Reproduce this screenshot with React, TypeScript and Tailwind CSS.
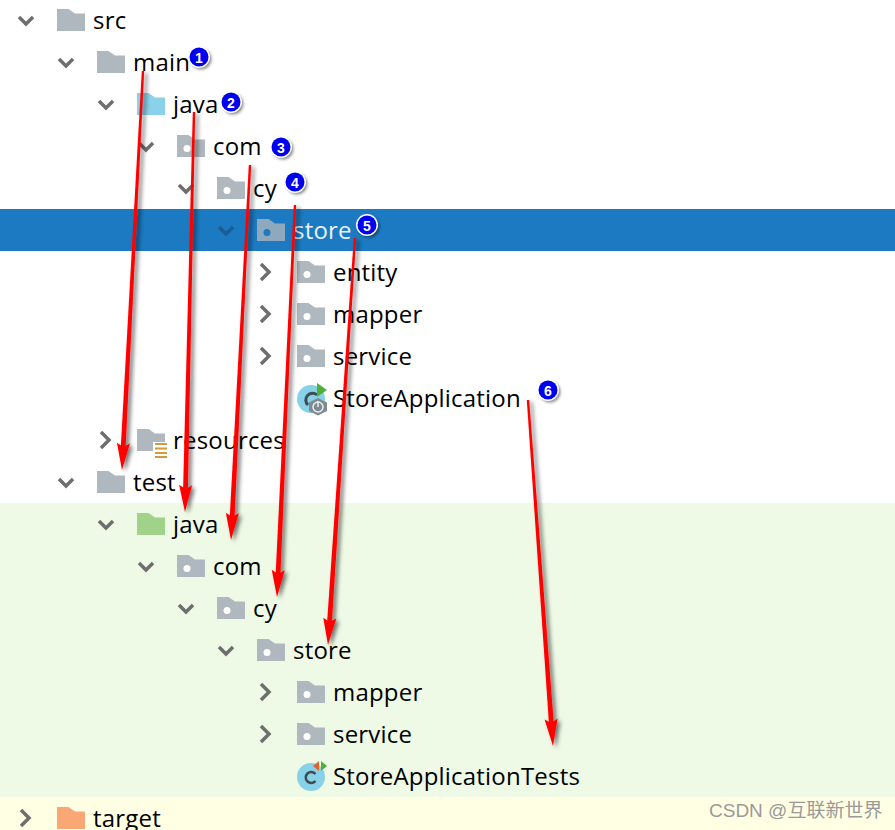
type Kind = 'plain' | 'pkg' | 'src' | 'testsrc' | 'res' | 'excluded' | 'spring' | 'testclass';

type Row = {
  name: string;
  depth: number;
  kind: Kind;
  arrow?: 'down' | 'right';
  tone?: 'selected' | 'test' | 'excluded';
};

const rows: Row[] = [
  { name: 'src', depth: 0, kind: 'plain', arrow: 'down' },
  { name: 'main', depth: 1, kind: 'plain', arrow: 'down' },
  { name: 'java', depth: 2, kind: 'src', arrow: 'down' },
  { name: 'com', depth: 3, kind: 'pkg', arrow: 'down' },
  { name: 'cy', depth: 4, kind: 'pkg', arrow: 'down' },
  { name: 'store', depth: 5, kind: 'pkg', arrow: 'down', tone: 'selected' },
  { name: 'entity', depth: 6, kind: 'pkg', arrow: 'right' },
  { name: 'mapper', depth: 6, kind: 'pkg', arrow: 'right' },
  { name: 'service', depth: 6, kind: 'pkg', arrow: 'right' },
  { name: 'StoreApplication', depth: 6, kind: 'spring' },
  { name: 'resources', depth: 2, kind: 'res', arrow: 'right' },
  { name: 'test', depth: 1, kind: 'plain', arrow: 'down' },
  { name: 'java', depth: 2, kind: 'testsrc', arrow: 'down', tone: 'test' },
  { name: 'com', depth: 3, kind: 'pkg', arrow: 'down', tone: 'test' },
  { name: 'cy', depth: 4, kind: 'pkg', arrow: 'down', tone: 'test' },
  { name: 'store', depth: 5, kind: 'pkg', arrow: 'down', tone: 'test' },
  { name: 'mapper', depth: 6, kind: 'pkg', arrow: 'right', tone: 'test' },
  { name: 'service', depth: 6, kind: 'pkg', arrow: 'right', tone: 'test' },
  { name: 'StoreApplicationTests', depth: 6, kind: 'testclass', tone: 'test' },
  { name: 'target', depth: 0, kind: 'excluded', arrow: 'right', tone: 'excluded' },
];

const badges = [
  { n: '1', x: 199, y: 57 },
  { n: '2', x: 231, y: 102 },
  { n: '3', x: 281, y: 147 },
  { n: '4', x: 295, y: 182 },
  { n: '5', x: 367, y: 225 },
  { n: '6', x: 548, y: 390 },
];

const arrows = [
  [143, 71, 122, 470],
  [194, 112, 185, 512],
  [250, 165, 231, 540],
  [295, 205, 277, 597],
  [355, 238, 328, 645],
  [528, 400, 553, 746],
];

const FOLDER = 'M0 0H11.5L18 4.5H28V22H0Z';

function Chevron({ dir, selected }: { dir: 'down' | 'right'; selected: boolean }) {
  return (
    <svg width="20" height="20" viewBox="0 0 20 20" fill="none">
      <path
        d={dir === 'down' ? 'M2 7L9 14L16 7' : 'M4 2L12 10L4 18'}
        stroke={selected ? '#1b5d92' : '#6e6e6e'}
        strokeWidth="3.5"
      />
    </svg>
  );
}

function NodeIcon({ kind, selected }: { kind: Kind; selected: boolean }) {
  if (kind === 'spring') {
    return (
      <svg width="34" height="32" viewBox="0 0 34 32" className="overflow-visible">
        <circle cx="14" cy="17" r="14" fill="#87d2e8" />
        <path d="M20 13A6.500 6.500 0 1 0 11 23" fill="none" stroke="#3f4a52" strokeWidth="3" />
        <path d="M20 1L30 8L20 15Z" fill="#4fae3c" />
        <path d="M21 16L30 20.500V29L21 33.500L12 29V20.500Z" fill="#7f8b91" />
        <circle cx="21" cy="25" r="5" fill="none" stroke="#e8eef0" strokeWidth="1.500" />
        <path d="M21 19V25" stroke="#e8eef0" strokeWidth="1.500" />
      </svg>
    );
  }
  if (kind === 'testclass') {
    return (
      <svg width="30" height="30" viewBox="0 0 30 30" className="overflow-visible">
        <circle cx="14" cy="16" r="14" fill="#87d2e8" />
        <path d="M18.500 13A5.500 5.500 0 1 0 18.500 20" fill="none" stroke="#3f4a52" strokeWidth="2.500" />
        <path d="M22 0V10L16 5Z" fill="#e4622c" />
        <path d="M24 0V10L30 5Z" fill="#4fae3c" />
      </svg>
    );
  }
  const fill =
    kind === 'src'
      ? '#8ad2ea'
      : kind === 'testsrc'
        ? '#a0d28a'
        : kind === 'excluded'
          ? '#f9a775'
          : selected
            ? '#8ea8be'
            : '#afb8bf';
  return (
    <svg width="28" height="22" viewBox="0 0 28 22" className="overflow-visible">
      <path d={kind === 'res' ? 'M0 0H11.5L18 4.5H28V13H16V22H0Z' : FOLDER} fill={fill} />
      {kind === 'pkg' && <circle cx="10" cy="13.500" r="3.500" fill={selected ? '#1b7ac1' : '#ffffff'} />}
      {kind === 'res' && (
        <path d="M18 15H30M18 19.500H30M18 24H30M18 28H30" stroke="#d49a3f" strokeWidth="2" />
      )}
    </svg>
  );
}

function TreeRow({ row }: { row: Row }) {
  const selected = row.tone === 'selected';
  const bg = selected
    ? 'bg-[#1b7ac1] text-[#e8f2fa]'
    : row.tone === 'test'
      ? 'bg-[#eefae6] text-black'
      : row.tone === 'excluded'
        ? 'bg-[#ffffe4] text-black'
        : 'text-black';
  return (
    <div className={`flex h-[42px] items-center ${bg}`} style={{ paddingLeft: 57 + row.depth * 40 }}>
      <div className="-ml-10 flex w-10 items-center">
        {row.arrow && <Chevron dir={row.arrow} selected={selected} />}
      </div>
      <div className="flex h-[22px] w-7 items-center">
        <NodeIcon kind={row.kind} selected={selected} />
      </div>
      <span className="ml-2 text-[24px] leading-[42px] tracking-[0.2px] whitespace-nowrap">{row.name}</span>
    </div>
  );
}

export default function App() {
  return (
    <div className="relative h-[830px] w-[895px] overflow-hidden bg-white font-['Open_Sans','Liberation_Sans',sans-serif]">
      <div className="-mt-px">
        {rows.map((row, i) => (
          <TreeRow key={i} row={row} />
        ))}
      </div>

      {/* annotation arrows drawn over the tree */}
      <svg width="895" height="830" viewBox="0 0 895 830" className="absolute left-0 top-0">
        <defs>
          <filter id="sh" x="-50%" y="-10%" width="200%" height="120%">
            <feDropShadow dx="3" dy="2" stdDeviation="2" floodColor="#000" floodOpacity="0.55" />
          </filter>
        </defs>
        {arrows.map(([x1, y1, x2, y2], i) => {
          const len = Math.hypot(x2 - x1, y2 - y1);
          const ux = (x2 - x1) / len;
          const uy = (y2 - y1) / len;
          const bx = x2 - ux * 27;
          const by = y2 - uy * 27;
          const nx = bx + ux * 4;
          const ny = by + uy * 4;
          const shaft = `${x1 - uy * 1.2},${y1 + ux * 1.2} ${nx - uy * 2.4},${ny + ux * 2.4} ${nx + uy * 2.4},${ny - ux * 2.4} ${x1 + uy * 1.2},${y1 - ux * 1.2}`;
          const head = `${x2},${y2} ${bx - uy * 6.5},${by + ux * 6.5} ${nx},${ny} ${bx + uy * 6.5},${by - ux * 6.5}`;
          return (
            <g key={i} filter="url(#sh)">
              <polygon points={shaft} fill="#ff0000" />
              <polygon points={head} fill="#ff0000" />
            </g>
          );
        })}
      </svg>

      {badges.map((b) => (
        <div
          key={b.n}
          className="absolute flex h-[19px] w-[19px] -translate-x-1/2 -translate-y-1/2 items-center justify-center rounded-full bg-[#0000f0] font-['Liberation_Sans',sans-serif] text-[14px] leading-none font-bold text-white shadow-[0_0_0_1.5px_#fff,2px_2px_3px_1px_rgba(0,0,0,0.45)]"
          style={{ left: b.x, top: b.y }}
        >
          {b.n}
        </div>
      ))}

      <div className="absolute left-[709px] top-[797px] font-['Liberation_Sans','Noto_Sans_CJK_SC',sans-serif] text-[19px] leading-[28px] whitespace-nowrap text-[#9a9a9a]">
        CSDN @互联新世界
      </div>
    </div>
  );
}
